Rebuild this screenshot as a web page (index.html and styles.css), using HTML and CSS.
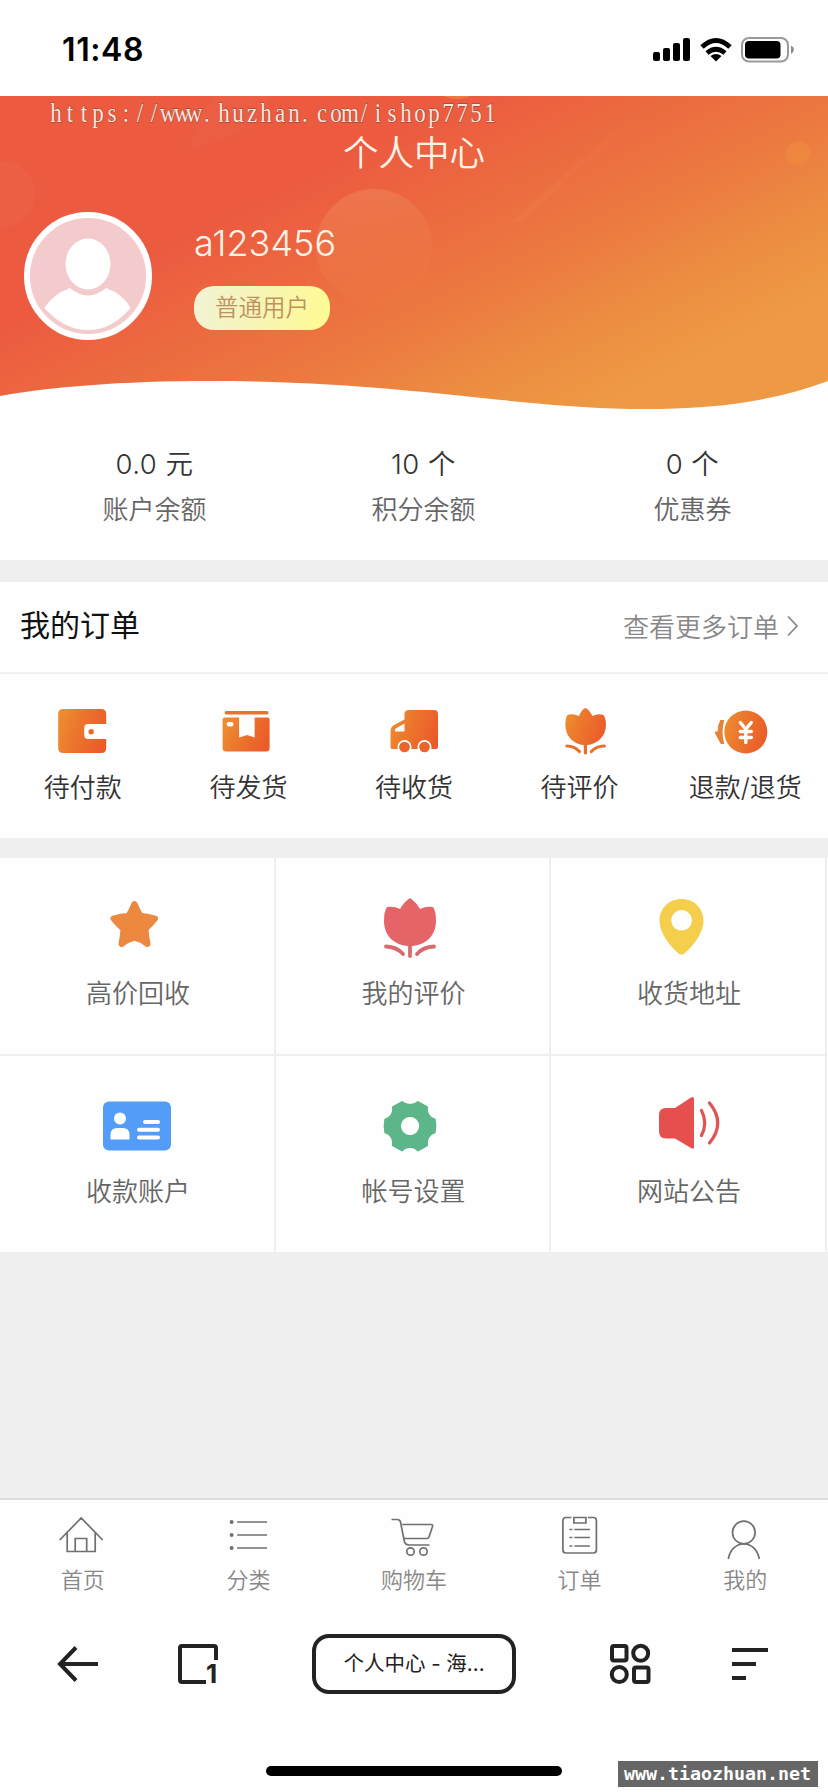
FILE: index.html
```html
<!DOCTYPE html>
<html lang="zh-CN">
<head>
<meta charset="utf-8">
<title>个人中心</title>
<link rel="stylesheet" href="styles.css">
</head>
<body>
<svg width="0" height="0" class="defs">
  <defs>
    <linearGradient id="warm" x1="0" y1="0.35" x2="1" y2="0.65"><stop offset="0" stop-color="#ed8c30"/><stop offset="0.35" stop-color="#ec782d"/><stop offset="1" stop-color="#ec5a2a"/></linearGradient>
  </defs>
</svg>
<div class="screen">
  <div class="status">
    <span class="time">11:48</span>
    <svg class="signals" width="144" height="28" viewBox="652 36 144 28">
      <rect x="653" y="52" width="7" height="9" rx="2"/><rect x="663" y="48" width="7" height="13" rx="2"/><rect x="673" y="43" width="7" height="18" rx="2"/><rect x="683" y="38" width="7" height="23" rx="2"/>
      <path d="M702 47Q716 34 730 47" fill="none" stroke="#000" stroke-width="5"/>
      <path d="M707 53Q716 45.500 725 53" fill="none" stroke="#000" stroke-width="4.600"/>
      <path d="M710.500 56Q716 52 721.500 56L716 61.500Z"/>
      <rect x="742" y="38" width="46" height="23.500" rx="7" fill="none" stroke="#9a9a9a" stroke-width="2"/>
      <rect x="745" y="41" width="35.500" height="17.500" rx="4"/>
      <path d="M791 45.500Q794 47 794 49.500T791 54Z" fill="#8c8c8c"/>
    </svg>
  </div>

  <header class="hero">
    <svg class="hero-bg" width="828" height="320" viewBox="0 0 828 320">
      <defs>
        <linearGradient id="hero" gradientUnits="userSpaceOnUse" x1="92" y1="184" x2="244" y2="488"><stop offset="0" stop-color="#ec5a40"/><stop offset="0.5" stop-color="#ec7740"/><stop offset="0.8" stop-color="#ec8e42"/><stop offset="1" stop-color="#ee9944"/></linearGradient>
        <linearGradient id="bubble" x1="0" y1="0" x2="0.300" y2="1"><stop offset="0" stop-color="#f0a070" stop-opacity="0.360"/><stop offset="1" stop-color="#f08a48" stop-opacity="0.080"/></linearGradient>
        <linearGradient id="streak" x1="1" y1="0" x2="0" y2="1"><stop offset="0" stop-color="#f4a060" stop-opacity="0"/><stop offset="1" stop-color="#f4a060" stop-opacity="0.120"/></linearGradient>
        <clipPath id="wave"><path d="M0 0H828V285C770 307 705 314 630 313C500 310 400 285 210 285C120 285 50 291 0 300Z"/></clipPath>
      </defs>
      <g clip-path="url(#wave)">
        <rect width="828" height="320" fill="url(#hero)"/>
        <circle cx="374" cy="151" r="58" fill="url(#bubble)"/>
        <circle cx="2" cy="98" r="33" fill="#f08060" opacity="0.140"/>
        <circle cx="798" cy="57" r="12" fill="#f2a040" opacity="0.250"/>
        <ellipse cx="457" cy="-2" rx="14" ry="5" fill="#f2a040" opacity="0.450"/>
        <path d="M214 0H270Q255 40 190 52Q195 20 214 0Z" fill="#f08a60" opacity="0.100"/>
        <path d="M640 10L514 124L520 126L646 16Z" fill="url(#streak)"/>
      </g>
    </svg>
    <svg class="watermark" width="460" height="32" viewBox="48 0 460 32">
      <text y="21.500" transform="scale(1 1.220)" x="56 70 84 98 112 126 140 154 168 182 194 207 224 238 252 266 280 294 305 322 336 350 364 378 392 406 420 434 448 462 476 490">https://www.huzhan.com/ishop7751</text>
    </svg>
    <h1 class="title">个人中心</h1>
    <div class="profile">
      <svg class="avatar" width="128" height="128" viewBox="0 0 128 128">
        <circle cx="64" cy="64" r="61" fill="#f4cbcc" stroke="#fff" stroke-width="6"/>
        <ellipse cx="64" cy="52" rx="22.500" ry="25.500" fill="#fff"/>
        <path d="M20.500 96Q29 82 46 76Q64 91 82 76Q99 82 106.500 96Q88 118 64 118T20.500 96Z" fill="#fff"/>
      </svg>
      <div class="who"><div class="name">a123456</div><div class="level">普通用户</div></div>
    </div>
  </header>

  <section class="stats">
    <div><div class="value">0.0 元</div><div class="label">账户余额</div></div>
    <div><div class="value">10 个</div><div class="label">积分余额</div></div>
    <div><div class="value">0 个</div><div class="label">优惠券</div></div>
  </section>

  <section class="orders">
    <div class="orders-head">
      <h2>我的订单</h2>
      <span class="more">查看更多订单<svg width="14" height="24" viewBox="785 614 14 24"><path d="M787 617.500L796 627L787 636.500" fill="none" stroke="#888" stroke-width="1.800"/></svg></span>
    </div>
    <div class="order-list">
      <div class="order">
        <svg width="60" height="56" viewBox="52.800 703 60 56"><path fill="url(#warm)" d="M63 709H101Q106 709 106 714V724H88Q84 724 84 728V735Q84 739 88 739H106V748Q106 753 101 753H63Q58 753 58 748V714Q58 709 63 709Z"/><circle cx="91" cy="731.700" r="2.700" fill="#ea6a2c"/></svg>
        <span>待付款</span>
      </div>
      <div class="order">
        <svg width="60" height="56" viewBox="218.400 703 60 56"><rect x="225" y="711" width="44" height="3.500" rx="1.700" fill="#eb712c"/><path fill="url(#warm)" fill-rule="evenodd" d="M225 717.500H239.500V737.500L247.500 735L255 737.500V717.500H268Q270 717.500 270 719.500V748Q270 751.500 266.500 751.500H226.500Q223 751.500 223 748V719.500Q223 717.500 225 717.500ZM229.500 722Q227 722 227 724.300T229.500 726.500H231.500Q234 726.500 234 724.300T231.500 722Z"/></svg>
        <span>待发货</span>
      </div>
      <div class="order">
        <svg width="60" height="56" viewBox="384 703 60 56"><path fill="url(#warm)" fill-rule="evenodd" d="M409 710H434Q438 710 438 714V747Q438 749 436 749H392Q390.500 749 390.500 747V731Q390.500 727 394 725L404.500 719.500V714Q404.500 710 409 710ZM395 729V731.500H404.500V723.500Z"/><g fill="#ea642b" stroke="#fff" stroke-width="1.700"><circle cx="404.500" cy="747" r="6.200"/><circle cx="424.500" cy="747" r="6.200"/></g></svg>
        <span>待收货</span>
      </div>
      <div class="order">
        <svg width="60" height="56" viewBox="549.600 703 60 56"><path fill="url(#warm)" d="M585 708Q588 708.500 592 716Q598 713 603 715Q605.500 718 605.500 725C605.500 737 596 745 585 745S565 737 565 725Q565 718 567 715Q572 713 578.500 716Q582 708.500 585 708Z"/><path fill="none" stroke="#e8702f" stroke-width="3.200" stroke-linecap="round" d="M585 744V753M566.500 746Q574 746 579 751.500M604 746Q596 746 591 751.500"/></svg>
        <span>待评价</span>
      </div>
      <div class="order">
        <svg width="60" height="56" viewBox="715.200 703 60 56"><circle cx="746" cy="732" r="21.500" fill="url(#warm)"/><path d="M740.500 722.500L746 729L751.500 722.500M746 730V742.500M740.500 731.500H751.500M740.500 737.500H751.500" fill="none" stroke="#fff" stroke-width="3.400" stroke-linecap="round"/><path d="M720.500 720H724.500Q721 732 724.500 744H721L715 733V731.500H718Q717.500 726 720.500 720Z" fill="#e88138"/></svg>
        <span>退款/退货</span>
      </div>
    </div>
  </section>

  <section class="menu">
    <div class="cell">
      <svg width="80" height="72" viewBox="97 892 80 72"><path fill="#ec883f" stroke="#ec883f" stroke-width="6" stroke-linejoin="round" d="M134.500 904Q137.500 911 140.500 916Q147 916 155 918.500Q150.500 924 145.500 929Q146 937 147.500 944Q141 939 134.500 937.500Q128 939 121.500 944Q123 937 123.500 929Q118 924 113.500 918.500Q121 916 128.500 916Q131.500 911 134.500 904Z"/></svg>
      <span>高价回收</span>
    </div>
    <div class="cell">
      <svg width="80" height="72" viewBox="373 892 80 72"><path fill="#e56467" d="M410 898Q416 902 420 909Q426 906 433 907Q436 911 436 921C436 936 425 946 410 946S384 936 384 921Q384 911 387 907Q394 906 400 909Q404 902 410 898Z"/><path fill="none" stroke="#d96a6c" stroke-width="3.800" stroke-linecap="round" d="M410 945V956M386 946.500Q397 947 403 954M434 946.500Q423 947 417 954"/></svg>
      <span>我的评价</span>
    </div>
    <div class="cell">
      <svg width="80" height="72" viewBox="648 892 80 72"><path fill="#f5cf4b" fill-rule="evenodd" d="M681.500 899C694 899 703.500 908 703.500 921C703.500 933 693 946 685 953Q681.500 956 678 953C670 946 659.500 933 659.500 921C659.500 908 669 899 681.500 899ZM681.500 910A10.300 10.300 0 1 0 681.600 910Z"/></svg>
      <span>收货地址</span>
    </div>
    <div class="cell">
      <svg width="80" height="72" viewBox="97 1090 80 72"><rect x="103" y="1101.500" width="68" height="49" rx="6" fill="#539cf8"/><g fill="#fff"><circle cx="120" cy="1118.500" r="6"/><path d="M110.500 1139.500V1135Q110.500 1128 117 1128H123Q129.500 1128 129.500 1135V1139.500Z"/><rect x="143" y="1120" width="17" height="4" rx="2"/><rect x="137" y="1127.700" width="23" height="4" rx="2"/><rect x="137" y="1135.500" width="23" height="4" rx="2"/></g></svg>
      <span>收款账户</span>
    </div>
    <div class="cell">
      <svg width="80" height="72" viewBox="373 1090 80 72"><path fill="#5cb68a" stroke="#5cb68a" stroke-width="2" stroke-linejoin="round" fill-rule="evenodd" d="M402 1102Q405 1105 410 1105T418 1102L427 1107Q426 1111 428.500 1115Q431 1119 434.700 1119.500Q436 1126 434.700 1132.500Q431 1133 428.500 1137Q426 1141 427 1145.500L418 1150.500Q415 1147 410 1147T402 1150.500L393 1145.500Q394 1141 391.500 1137Q389 1133 385.300 1132.500Q384 1126 385.300 1119.500Q389 1119 391.500 1115Q394 1111 393 1107ZM410 1116A10 10 0 1 0 410.100 1116Z"/></svg>
      <span>帐号设置</span>
    </div>
    <div class="cell">
      <svg width="80" height="72" viewBox="648 1090 80 72"><path fill="#e5504e" d="M666 1108H675L691 1097.500Q694 1096 694 1099V1147Q694 1150 691 1148L675 1138.500H666Q659 1138.500 659 1131V1115Q659 1108 666 1108Z"/><path d="M701.500 1110.500Q708 1123 701.500 1135.500M709.500 1103Q726 1123 709.500 1143" fill="none" stroke="#df5553" stroke-width="3.200" stroke-linecap="round"/></svg>
      <span>网站公告</span>
    </div>
  </section>

  <div class="spacer"></div>

  <nav class="tabs">
    <div><svg width="50" height="46" viewBox="57.800 1514 50 46"><path d="M59.500 1540L81 1518L102.500 1540M67 1532.500V1551.500H95V1532.500M75 1551.500V1538.500H86.500V1551.500"/></svg><span>首页</span></div>
    <div><svg width="50" height="46" viewBox="223.400 1514 50 46"><path d="M237.500 1522H267.500M237.500 1535H267.500M237.500 1548H267.500"/><g class="dots"><circle cx="232" cy="1522" r="2"/><circle cx="232" cy="1535" r="2"/><circle cx="232" cy="1548" r="2"/></g></svg><span>分类</span></div>
    <div><svg width="50" height="46" viewBox="389 1514 50 46"><path d="M391.500 1519.500H397Q400 1519.500 400.500 1522L404.500 1542Q405.500 1545 409 1545H429.500M402.300 1524.500H431Q433 1524.500 432.500 1526.500L429 1537Q428.500 1538.500 427 1538.500H404.500"/><circle cx="410.500" cy="1551.500" r="3.700"/><circle cx="423.500" cy="1551.500" r="3.700"/></svg><span>购物车</span></div>
    <div><svg width="50" height="46" viewBox="554.600 1514 50 46"><path d="M571 1517.500H565.500Q562.500 1517.500 562.500 1520.500V1550Q562.500 1553 565.500 1553H593Q596 1553 596 1550V1520.500Q596 1517.500 593 1517.500H587.500M573.500 1517.500H585.500V1523H573.500ZM569 1529.500H572M574 1529.500H589.500M569 1537.500H572M574 1537.500H589.500M569 1546H572M574 1546H589.500"/></svg><span>订单</span></div>
    <div><svg width="50" height="46" viewBox="720.200 1514 50 46"><circle cx="744" cy="1532.500" r="11.300"/><path d="M728.500 1559C730 1550 736 1544 744 1544S758 1550 759.500 1559"/></svg><span>我的</span></div>
  </nav>

  <div class="browser">
    <svg width="44" height="44" viewBox="56 1642 44 44"><path d="M98 1664H61M76 1647.500L60 1664L76 1680.500"/></svg>
    <div class="pages">
      <svg width="44" height="44" viewBox="176 1642 44 44"><path d="M206 1682H182Q180 1682 180 1680V1648Q180 1646 182 1646H214Q216 1646 216 1648V1660"/></svg>
      <span class="count">1</span>
    </div>
    <div class="address">个人中心 - 海...</div>
    <svg class="apps" width="44" height="44" viewBox="608 1642 44 44"><rect x="612" y="1646" width="14.500" height="14.500" rx="2"/><circle cx="640.700" cy="1653.300" r="7.500"/><circle cx="619.300" cy="1674.500" r="7.500"/><rect x="634" y="1667.500" width="14.500" height="14.500" rx="2"/></svg>
    <svg class="lines" width="44" height="44" viewBox="728 1642 44 44"><path d="M732 1650H768M732 1664H756M732 1678H746"/></svg>
  </div>
  <div class="home-bar"></div>
  <div class="source">www.tiaozhuan.net</div>
</div>
</body>
</html>
```
FILE: styles.css
```css
* { box-sizing: border-box; }
body { margin: 0; background: #fff; font-family: Inter, "Noto Sans CJK SC", sans-serif; }
h1, h2 { margin: 0; font-weight: 350; }
svg { display: block; flex: none; }
.defs { position: absolute; }
.screen { position: relative; width: 828px; height: 1792px; overflow: hidden; display: flex; flex-direction: column; background: #fefefe; font-weight: 350; }

.status { height: 96px; flex: none; display: flex; justify-content: space-between; align-items: flex-start; padding: 36px 32px 0 62px; }
.time { font-size: 32px; line-height: 28px; font-weight: 600; letter-spacing: 0.600px; color: #000; }

.hero { position: relative; height: 320px; flex: none; }
.hero-bg { position: absolute; left: 0; top: 0; }
.watermark, .title, .profile { position: relative; }
.watermark { margin-left: 48px; }
.watermark text { font-family: "Liberation Serif", serif; font-size: 23px; text-anchor: middle; fill: #fbe6de; stroke: #8a4030; stroke-width: .7px; paint-order: stroke; }
.title { height: 58px; margin-top: -4px; font-size: 35.500px; line-height: 60px; text-align: center; color: #fff3e8; }
.profile { display: flex; gap: 42px; padding: 30px 0 0 24px; }
.who { display: flex; flex-direction: column; align-items: flex-start; padding-top: 9px; }
.name { font-size: 36px; line-height: 44px; font-weight: 300; color: #fff3e8; }
.level { margin-top: 21px; width: 136px; height: 44px; border-radius: 20px; text-align: center; font-size: 23.500px; line-height: 44px; color: #bf9160; background: linear-gradient(100deg, #f1f3d6, #f7f5b4 50%, #fffb92); }

.stats { height: 144px; flex: none; display: grid; grid-template-columns: repeat(3, 269px); padding: 26px 0 0 20px; text-align: center; }
.value { font-size: 27.500px; line-height: 44px; letter-spacing: 0.500px; color: #333; }
.label { font-size: 26px; line-height: 48px; color: #666; }

.orders { border-top: 22px solid #efefef; flex: none; height: 278px; }
.orders-head { height: 92px; display: flex; justify-content: space-between; align-items: center; padding: 0 28px 4px 20px; border-bottom: 2px solid #f0f0f0; }
.orders-head h2 { font-size: 30px; line-height: 44px; font-weight: 400; color: #111; }
.more { display: flex; align-items: center; gap: 7px; font-size: 26px; color: #888; }
.order-list { display: grid; grid-template-columns: repeat(5, 1fr); padding-top: 29px; }
.order { display: flex; flex-direction: column; align-items: center; font-size: 26px; line-height: 38px; color: #333; gap: 10px; white-space: nowrap; }

.menu { border-top: 20px solid #efefef; flex: none; display: grid; grid-template-columns: 276px 275px 276px; grid-template-rows: 198px 196px; background: #fefefe; }
.cell { border-right: 2px solid #eee; border-bottom: 2px solid #eee; display: flex; flex-direction: column; align-items: center; gap: 11px; padding-top: 34px; font-size: 26px; line-height: 38px; color: #666; }
.cell span { padding-left: 2px; }
.cell:nth-child(n+4) { border-bottom: 0; }
.spacer { height: 246px; flex: none; background: #efefef; }

.tabs { height: 104px; flex: none; border-top: 2px solid #dcdcdc; display: grid; grid-template-columns: repeat(5, 1fr); padding-top: 14px; }
.tabs div { display: flex; flex-direction: column; align-items: center; gap: 4px; font-size: 22px; line-height: 32px; color: #888; }
.tabs svg { fill: none; stroke: #707070; stroke-width: 1.700px; }
.tabs .dots { fill: #707070; stroke: none; }

.browser { height: 124px; flex: none; display: flex; align-items: center; padding: 0 56px; }
.browser svg { fill: none; stroke: #222; stroke-width: 4px; }
.pages { position: relative; margin-left: 76px; }
.count { position: absolute; left: 30px; top: 18px; font-size: 26px; line-height: 28px; font-weight: 700; color: #222; }
.address { width: 204px; height: 60px; margin-left: 92px; border: 4px solid #222; border-radius: 17px; text-align: center; font-size: 20.500px; line-height: 52px; font-weight: 400; color: #222; }
.apps { margin-left: 92px; }
.lines { margin-left: 76px; }
.home-bar { width: 296px; height: 10px; border-radius: 5px; background: #000; margin: 40px auto 0; }
.source { position: absolute; left: 618px; top: 1761px; width: 200px; height: 26px; padding-left: 6px; background: #666; color: #fff; font: 700 18.300px/25px "DejaVu Sans Mono", monospace; white-space: nowrap; }
```
